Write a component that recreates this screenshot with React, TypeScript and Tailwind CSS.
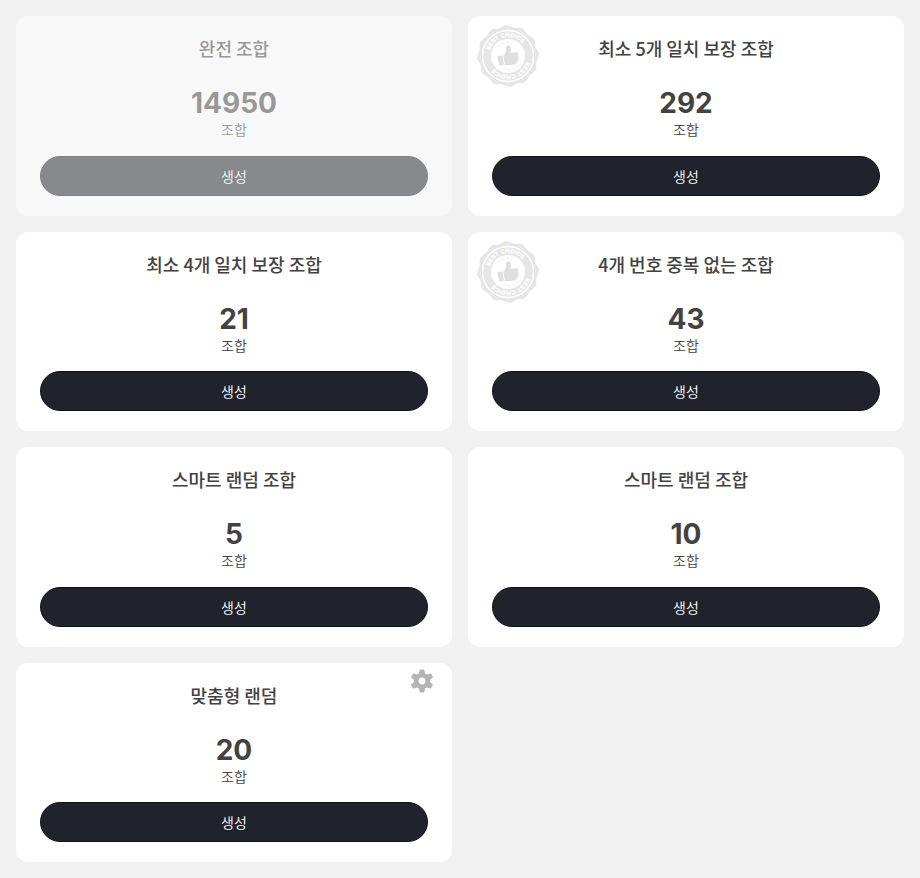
import { useId } from "react";

type Combo = {
  title: string;
  count: number;
  disabled?: boolean;
  best?: boolean;
  configurable?: boolean;
};

const combos: Combo[] = [
  { title: "완전 조합", count: 14950, disabled: true },
  { title: "최소 5개 일치 보장 조합", count: 292, best: true },
  { title: "최소 4개 일치 보장 조합", count: 21 },
  { title: "4개 번호 중복 없는 조합", count: 43, best: true },
  { title: "스마트 랜덤 조합", count: 5 },
  { title: "스마트 랜덤 조합", count: 10 },
  { title: "맞춤형 랜덤", count: 20, configurable: true },
];

// Wavy outline of the seal: twelve lobes around the centre.
const sealPath =
  Array.from({ length: 144 }, (_, i) => {
    const a = (i / 144) * Math.PI * 2;
    const r = 60 + 2 * Math.cos(12 * a + 0.6);
    const x = (r * Math.cos(a)).toFixed(2);
    const y = (r * Math.sin(a)).toFixed(2);
    return `${i === 0 ? "M" : "L"}${x} ${y}`;
  }).join("") + "Z";

function BestBadge() {
  const arc = useId();
  return (
    <svg viewBox="-64 -64 128 128" className="absolute left-2 top-2 size-16" aria-hidden="true">
      <path d={sealPath} fill="#e6e6e6" />
      <circle r="51" fill="none" stroke="#fff" strokeWidth="3" />
      <circle r="34" fill="#fff" />
      <path id={arc} d="M-38 0A38 38 0 0 1 38 0" fill="none" />
      {[-12, 168].map((angle) => (
        <g key={angle} transform={`rotate(${angle})`} fill="#fff">
          <text className="font-['Inter',sans-serif] text-[12px] font-extrabold" textAnchor="middle">
            <textPath href={`#${arc}`} startOffset="50%">
              BEST CHOICE
            </textPath>
          </text>
          <g fill="#e6e6e6">
            <circle cx="-13" cy="-24" r="1.5" />
            <circle cx="-5" cy="-27" r="1.5" />
            <circle cx="5" cy="-27" r="1.5" />
            <circle cx="13" cy="-24" r="1.5" />
          </g>
        </g>
      ))}
      <g transform="rotate(-10)" fill="#dfdfdf">
        <path d="M-21-3H-11V16H-21Z" />
        <path d="M-9-2C-4-5-1-11-1-17C-1-23 8-23 8-15C8-11 7-8 6-5H17C22-5 22 1 19 2C22 4 21 8 18 9C20 12 18 15 15 15C15 18 13 19 10 19H1C-3 19-5 17-9 16Z" />
      </g>
    </svg>
  );
}

function GearIcon() {
  return (
    <svg viewBox="-12 -12 24 24" className="size-6" aria-hidden="true">
      <g fill="currentColor" stroke="currentColor" strokeWidth="1" strokeLinejoin="round">
        {[0, 60, 120, 180, 240, 300].map((angle) => (
          <path key={angle} d="M-1.8-11H1.8L2.8-6.5H-2.8Z" transform={`rotate(${angle})`} />
        ))}
      </g>
      <circle r="5.7" fill="none" stroke="currentColor" strokeWidth="4.6" />
    </svg>
  );
}

function ComboCard({ title, count, disabled, best, configurable }: Combo) {
  return (
    <section
      className={`relative flex flex-col rounded-xl bg-white px-6 py-5 text-center ${disabled ? "opacity-50" : ""}`}
    >
      {best && <BestBadge />}
      {configurable && (
        <button type="button" aria-label="설정" className="absolute right-4.5 top-1.5 text-[#b4b4b4]">
          <GearIcon />
        </button>
      )}
      <h2 className="text-lg leading-6 font-medium">{title}</h2>
      <p className="mt-[27px] font-['Inter',sans-serif] text-[28px] leading-8 font-bold">{count}</p>
      <p className="text-sm leading-5 font-[350]">조합</p>
      <button
        type="button"
        disabled={disabled}
        className="mt-auto h-10 w-full rounded-full border border-[#111318] bg-[#20232b] text-sm font-[350] text-white"
      >
        생성
      </button>
    </section>
  );
}

export default function App() {
  return (
    <main className="grid min-h-screen auto-rows-fr grid-cols-2 gap-4 bg-[#f1f1f1] p-4 font-['Noto_Sans_CJK_KR',sans-serif] text-[#424242]">
      {combos.map((combo, i) => (
        <ComboCard key={i} {...combo} />
      ))}
    </main>
  );
}
